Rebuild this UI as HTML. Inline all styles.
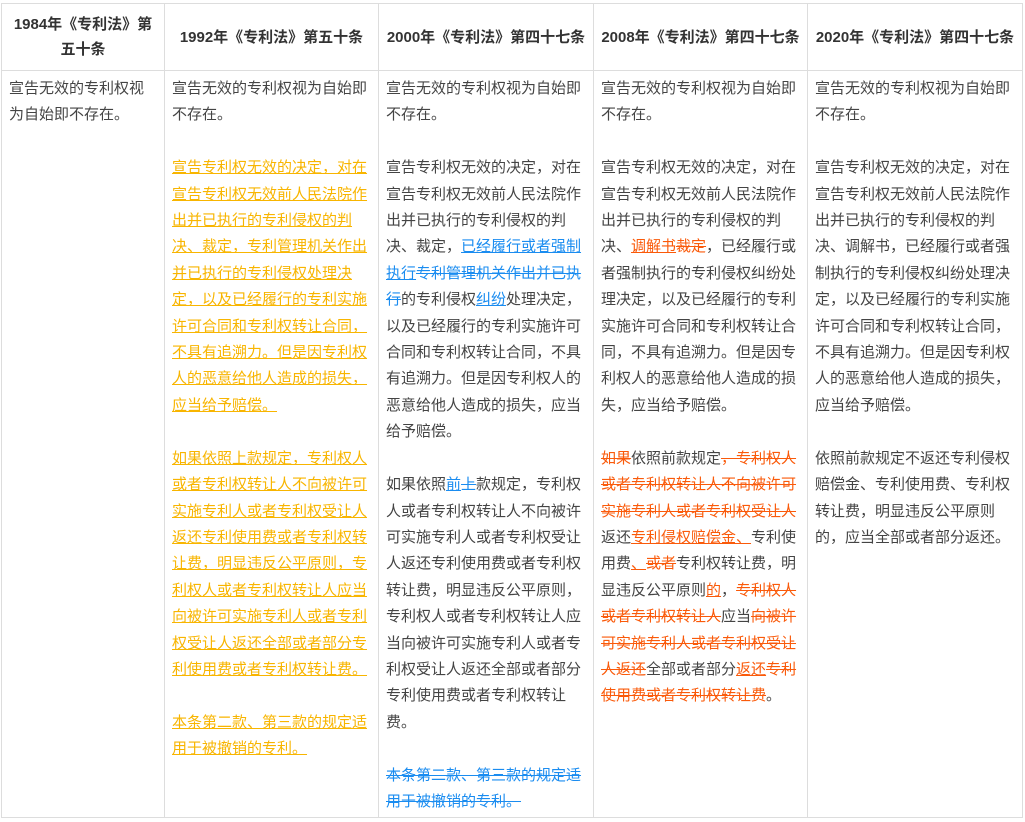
<!DOCTYPE html>
<html><head><meta charset="utf-8"><style>
body{margin:0;background:#fff;}
table{position:absolute;left:1px;top:3px;border-collapse:collapse;table-layout:fixed;width:1021px;font-family:"Liberation Sans","Noto Sans CJK SC",sans-serif;font-size:15px;}
td,th{border:1px solid #ddd;vertical-align:top;white-space:nowrap;overflow:hidden;}
th{height:66px;vertical-align:middle;text-align:center;font-weight:bold;color:#333;line-height:25px;padding:0 2px;}
td{height:741px;color:#444;line-height:26.4px;padding:5px 7px 0 7px;}
.o{color:#f8b500;text-decoration:underline;}
.b{color:#1a8cf0;}
.r{color:#fa5a0a;}
.u{text-decoration:underline;}
.s{text-decoration:line-through;}
</style></head><body>
<table>
<colgroup><col style="width:163px"><col style="width:214px"><col style="width:215px"><col style="width:214px"><col style="width:215px"></colgroup>
<tr>
<th>1984年《专利法》第<br>五十条</th>
<th>1992年《专利法》第五十条</th>
<th>2000年《专利法》第四十七条</th>
<th>2008年《专利法》第四十七条</th>
<th>2020年《专利法》第四十七条</th>
</tr>
<tr>
<td>宣告无效的专利权视<br>为自始即不存在。</td>
<td>宣告无效的专利权视为自始即<br>不存在。<br><br><span class="o">宣告专利权无效的决定，对在<br>宣告专利权无效前人民法院作<br>出并已执行的专利侵权的判<br>决、裁定，专利管理机关作出<br>并已执行的专利侵权处理决<br>定，以及已经履行的专利实施<br>许可合同和专利权转让合同，<br>不具有追溯力。但是因专利权<br>人的恶意给他人造成的损失，<br>应当给予赔偿。</span><br><br><span class="o">如果依照上款规定，专利权人<br>或者专利权转让人不向被许可<br>实施专利人或者专利权受让人<br>返还专利使用费或者专利权转<br>让费，明显违反公平原则，专<br>利权人或者专利权转让人应当<br>向被许可实施专利人或者专利<br>权受让人返还全部或者部分专<br>利使用费或者专利权转让费。</span><br><br><span class="o">本条第二款、第三款的规定适<br>用于被撤销的专利。</span></td>
<td>宣告无效的专利权视为自始即<br>不存在。<br><br>宣告专利权无效的决定，对在<br>宣告专利权无效前人民法院作<br>出并已执行的专利侵权的判<br>决、裁定，<span class="b u">已经履行或者强制<br>执行</span><span class="b s">专利管理机关作出并已执<br>行</span>的专利侵权<span class="b u">纠纷</span>处理决定，<br>以及已经履行的专利实施许可<br>合同和专利权转让合同，不具<br>有追溯力。但是因专利权人的<br>恶意给他人造成的损失，应当<br>给予赔偿。<br><br>如果依照<span class="b u">前</span><span class="b s">上</span>款规定，专利权<br>人或者专利权转让人不向被许<br>可实施专利人或者专利权受让<br>人返还专利使用费或者专利权<br>转让费，明显违反公平原则，<br>专利权人或者专利权转让人应<br>当向被许可实施专利人或者专<br>利权受让人返还全部或者部分<br>专利使用费或者专利权转让<br>费。<br><br><span class="b s">本条第二款、第三款的规定适<br>用于被撤销的专利。</span></td>
<td>宣告无效的专利权视为自始即<br>不存在。<br><br>宣告专利权无效的决定，对在<br>宣告专利权无效前人民法院作<br>出并已执行的专利侵权的判<br>决、<span class="r u">调解书</span><span class="r s">裁定</span>，已经履行或<br>者强制执行的专利侵权纠纷处<br>理决定，以及已经履行的专利<br>实施许可合同和专利权转让合<br>同，不具有追溯力。但是因专<br>利权人的恶意给他人造成的损<br>失，应当给予赔偿。<br><br><span class="r s">如果</span>依照前款规定<span class="r s">，专利权人<br>或者专利权转让人不向被许可<br>实施专利人或者专利权受让人</span><br>返还<span class="r u">专利侵权赔偿金、</span>专利使<br>用费<span class="r u">、</span><span class="r s">或者</span>专利权转让费，明<br>显违反公平原则<span class="r u">的</span>，<span class="r s">专利权人<br>或者专利权转让人</span>应当<span class="r s">向被许<br>可实施专利人或者专利权受让<br>人返还</span>全部或者部分<span class="r u">返还</span><span class="r s">专利<br>使用费或者专利权转让费</span>。</td>
<td>宣告无效的专利权视为自始即<br>不存在。<br><br>宣告专利权无效的决定，对在<br>宣告专利权无效前人民法院作<br>出并已执行的专利侵权的判<br>决、调解书，已经履行或者强<br>制执行的专利侵权纠纷处理决<br>定，以及已经履行的专利实施<br>许可合同和专利权转让合同，<br>不具有追溯力。但是因专利权<br>人的恶意给他人造成的损失，<br>应当给予赔偿。<br><br>依照前款规定不返还专利侵权<br>赔偿金、专利使用费、专利权<br>转让费，明显违反公平原则<br>的，应当全部或者部分返还。</td>
</tr>
</table>
</body></html>
